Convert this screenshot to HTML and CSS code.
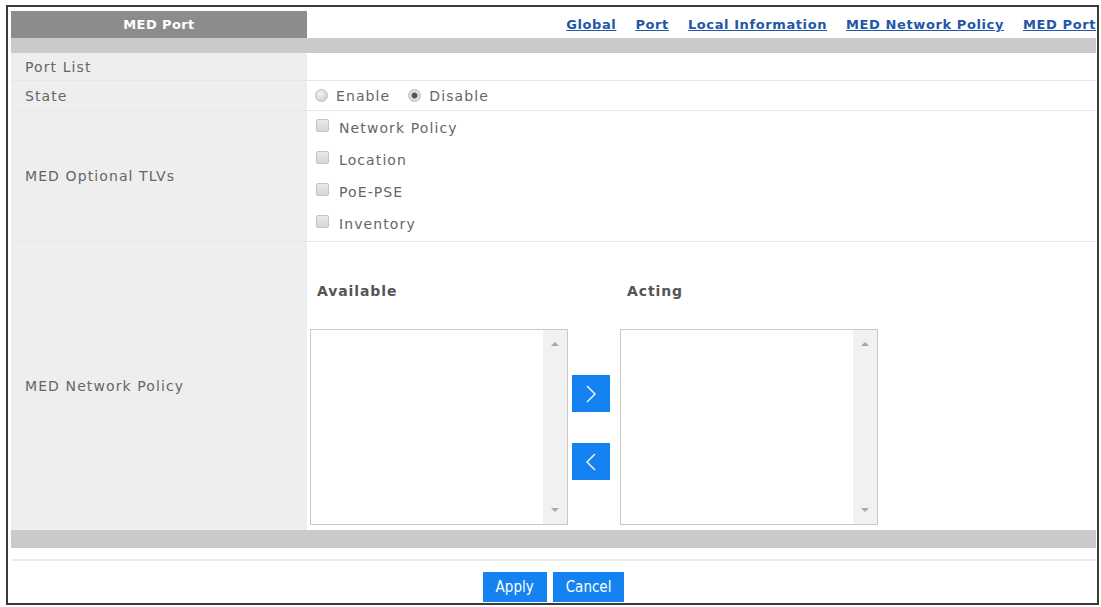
FILE: index.html
```html
<!DOCTYPE html>
<html>
    <head>
        <meta charset="utf-8">
        <title>MED Port</title>
        <link rel="stylesheet" href="styles.css">
    </head>
    <body>
        <div class="frame">
            <div class="tabbar">
                <div class="tab">MED Port</div>
                <div class="links">
                    <a href="#">Global</a>
                    <a href="#">Port</a>
                    <a href="#">Local Information</a>
                    <a href="#">MED Network Policy</a>
                    <a href="#">MED Port</a>
                </div>
            </div>
            <div class="bar"></div>

            <div class="row row-port">
                <div class="label">Port List</div>
                <div class="value"></div>
            </div>
            <div class="row row-state">
                <div class="label">State</div>
                <div class="value">
                    <span class="radio"></span><span class="opt">Enable</span>
                    <span class="radio checked"></span><span class="opt">Disable</span>
                </div>
            </div>
            <div class="row row-tlv">
                <div class="label">MED Optional TLVs</div>
                <div class="value checks">
                    <div class="check"><span class="box"></span>Network Policy</div>
                    <div class="check"><span class="box"></span>Location</div>
                    <div class="check"><span class="box"></span>PoE-PSE</div>
                    <div class="check"><span class="box"></span>Inventory</div>
                </div>
            </div>
            <div class="row row-policy">
                <div class="label">MED Network Policy</div>
                <div class="value picker">
                    <div class="col">
                        <div class="head">Available</div>
                        <div class="list"><div class="scroll"><span class="up"></span><span class="down"></span></div></div>
                    </div>
                    <div class="moves">
                        <button class="move">
                            <svg width="12" height="18" viewBox="0 0 12 18"><path d="M2 1 L10 9 L2 17" fill="none" stroke="#e8f2ff" stroke-width="1.5"/></svg>
                        </button>
                        <button class="move">
                            <svg width="12" height="18" viewBox="0 0 12 18"><path d="M10 1 L2 9 L10 17" fill="none" stroke="#e8f2ff" stroke-width="1.5"/></svg>
                        </button>
                    </div>
                    <div class="col">
                        <div class="head">Acting</div>
                        <div class="list"><div class="scroll"><span class="up"></span><span class="down"></span></div></div>
                    </div>
                </div>
            </div>
            <div class="bar bar-bottom"></div>

            <div class="actions">
                <button class="btn">Apply</button>
                <button class="btn">Cancel</button>
            </div>
        </div>
    </body>
</html>
```

FILE: styles.css
```css
body {
    margin: 0;
    background: #fff;
    font-family: "DejaVu Sans", sans-serif;
}
.frame {
    margin: 5px 2px 0 6px;
    border: 2px solid #3a3a3a;
    padding: 4px 1px 0 3px;
    box-sizing: border-box;
    width: 1093px;
    height: 600px;
}
.tabbar {
    display: flex;
    height: 27px;
}
.tab {
    width: 296px;
    background: #8c8c8c;
    color: #fff;
    font-weight: bold;
    font-size: 13px;
    letter-spacing: 0.4px;
    text-align: center;
    line-height: 27px;
}
.links {
    flex: 1;
    display: flex;
    justify-content: flex-end;
    align-items: center;
    gap: 19px;
    white-space: nowrap;
    overflow: hidden;
}
.links a {
    color: #2356a8;
    font-size: 13px;
    font-weight: bold;
    letter-spacing: 0.6px;
}
.bar {
    height: 15px;
    background: #cacaca;
}
.row {
    display: grid;
    grid-template-columns: 296px 1fr;
    border-bottom: 1px solid #e6e6e6;
    color: #666;
    font-size: 14px;
    letter-spacing: 1.1px;
}
.label {
    background: #eeeeee;
    padding-left: 14px;
    display: flex;
    align-items: center;
}
.value {
    display: flex;
    align-items: center;
    padding-left: 6px;
}
.row-port { height: 27px; }
.row-state { height: 29px; }
.row-tlv { height: 130px; }
.row-policy { height: 288px; border-bottom: 0; }

.radio {
    width: 13px;
    height: 13px;
    border-radius: 50%;
    background: radial-gradient(circle at 40% 35%, #f4f4f4, #c4c4c4);
    border: 1px solid #c0c0c0;
    box-sizing: border-box;
    margin: 0 8px 0 2px;
}
.radio.checked {
    background: radial-gradient(circle, #555 0 2.5px, #e6e6e6 3.5px, #c4c4c4);
}
.opt {
    margin-right: 16px;
}
.checks {
    flex-direction: column;
    align-items: flex-start;
    justify-content: flex-start;
    padding-left: 9px;
    padding-top: 1px;
}
.check {
    display: flex;
    align-items: center;
    height: 32px;
}
.box {
    width: 13px;
    height: 13px;
    border: 1px solid #c4c4c4;
    border-radius: 2px;
    background: linear-gradient(#eaeaea, #d6d6d6);
    box-sizing: border-box;
    margin-right: 10px;
    margin-top: -6px;
}
.picker {
    align-items: flex-start;
    padding-left: 3px;
}
.col {
    display: flex;
    flex-direction: column;
}
.head {
    font-weight: bold;
    color: #555;
    letter-spacing: 0.9px;
    padding: 41px 0 0 7px;
    height: 46px;
}
.list {
    width: 258px;
    height: 196px;
    border: 1px solid #c8c8c8;
    box-sizing: border-box;
    display: flex;
    justify-content: flex-end;
    background: #fff;
}
.scroll {
    width: 24px;
    background: #f1f1f1;
    position: relative;
}
.up, .down {
    position: absolute;
    left: 8px;
    width: 0;
    height: 0;
    border-left: 4px solid transparent;
    border-right: 4px solid transparent;
}
.up {
    top: 12px;
    border-bottom: 4px solid #a8a8a8;
}
.down {
    bottom: 12px;
    border-top: 4px solid #a8a8a8;
}
.moves {
    display: flex;
    flex-direction: column;
    gap: 31px;
    padding-top: 133px;
    margin: 0 10px 0 4px;
}
.move {
    width: 38px;
    height: 37px;
    background: #1482f0;
    border: 0;
    padding: 0;
    display: flex;
    align-items: center;
    justify-content: center;
}
.bar-bottom {
    height: 18px;
}
.actions {
    margin-top: 11px;
    border-top: 2px solid #ececec;
    display: flex;
    justify-content: center;
    gap: 6px;
    padding-top: 11px;
}
.btn {
    background: #1482f0;
    color: #fff;
    border: 0;
    font-family: "DejaVu Sans Condensed", "DejaVu Sans", sans-serif;
    font-size: 15px;
    height: 30px;
    padding: 0 13px;
}
```
